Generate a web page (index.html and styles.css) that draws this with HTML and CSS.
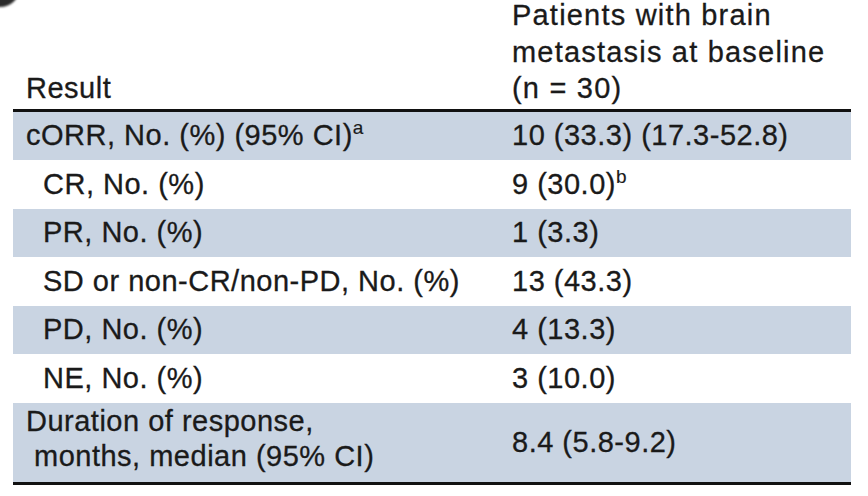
FILE: index.html
```html
<!DOCTYPE html>
<html>
<head>
<meta charset="utf-8">
<link rel="stylesheet" href="styles.css">
</head>
<body>
<div class="page">
  <div class="blob"></div>
  <table class="results">
    <thead>
      <tr>
        <th class="c1">Result</th>
        <th class="c2 head2">Patients with brain<br>metastasis at baseline<br>(n = 30)</th>
      </tr>
    </thead>
    <tbody>
      <tr class="band">
        <td class="c1">cORR, No. (%) (95% CI)<sup>a</sup></td>
        <td class="c2">10 (33.3) (17.3-52.8)</td>
      </tr>
      <tr>
        <td class="c1 sub">CR, No. (%)</td>
        <td class="c2">9 (30.0)<sup>b</sup></td>
      </tr>
      <tr class="band">
        <td class="c1 sub">PR, No. (%)</td>
        <td class="c2">1 (3.3)</td>
      </tr>
      <tr>
        <td class="c1 sub">SD or non-CR/non-PD, No. (%)</td>
        <td class="c2">13 (43.3)</td>
      </tr>
      <tr class="band">
        <td class="c1 sub">PD, No. (%)</td>
        <td class="c2">4 (13.3)</td>
      </tr>
      <tr>
        <td class="c1 sub">NE, No. (%)</td>
        <td class="c2">3 (10.0)</td>
      </tr>
      <tr class="band last">
        <td class="c1 hang">Duration of response,<br>months, median (95% CI)</td>
        <td class="c2">8.4 (5.8-9.2)</td>
      </tr>
    </tbody>
  </table>
</div>
</body>
</html>
```
FILE: styles.css
```css
html, body {
  margin: 0;
  background: #ffffff;
}

body {
  font-family: "Liberation Sans", Arial, Helvetica, sans-serif;
  color: #1a1a1a;
}

.page {
  position: relative;
  width: 868px;
  height: 496px;
  overflow: hidden;
  padding: 0 17px 0 13px;
  box-sizing: border-box;
}

.blob {
  position: absolute;
  left: -20px;
  top: -33px;
  width: 40px;
  height: 40px;
  border-radius: 50%;
  background: #2a2a2a;
  filter: blur(1px);
}

.results {
  width: 838px;
  border-collapse: collapse;
  margin-top: -3px;
  font-size: 29px;
  letter-spacing: 0.5px;
  -webkit-text-stroke: 0.3px #1a1a1a;
}

.results th {
  font-weight: normal;
  text-align: left;
  vertical-align: bottom;
  line-height: 36.5px;
  padding: 0 0 2px 0;
  border-bottom: 3px solid #111111;
}

.results th.c1 {
  width: 486px;
  padding-left: 13px;
}

.head2 {
  letter-spacing: 1.2px;
}

.results td {
  height: 48.5px;
  padding: 0;
  line-height: 35px;
  vertical-align: middle;
}

.results td.c1 {
  padding-left: 13px;
}

.results td.sub {
  padding-left: 30px;
}

.band td {
  background: #c9d4e2;
}

.last td {
  height: 73px;
  border-bottom: 3px solid #111111;
}

.results td.hang {
  padding-left: 21px;
  text-indent: -8px;
  padding-bottom: 6px;
}

sup {
  font-size: 19px;
  line-height: 0;
  vertical-align: 11px;
  letter-spacing: 0;
  -webkit-text-stroke: 0.15px #1a1a1a;
}
```
